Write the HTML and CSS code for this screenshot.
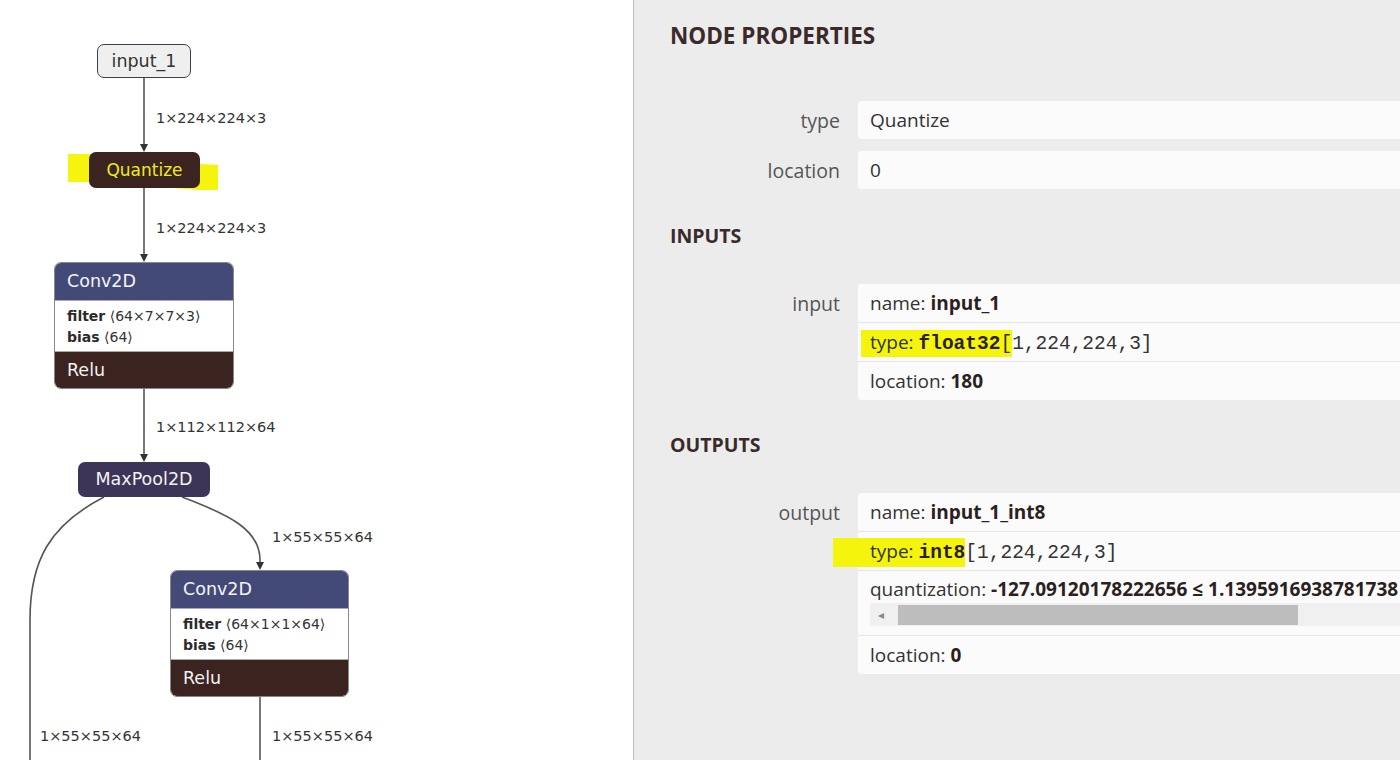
FILE: index.html
```html
<!DOCTYPE html>
<html>
<head>
<meta charset="utf-8">
<link rel="stylesheet" href="styles.css">
</head>
<body>
<div class="app">
  <div class="graph">
    <svg class="edges" width="633" height="760" viewBox="0 0 633 760">
      <polygon class="marker" points="68,154 90,154 200,164 218,165 218,190 200,190 90,182 68,182"/>
      <g class="lines">
        <path d="M144,78 L144,150"/>
        <path d="M144,188 L144,260"/>
        <path d="M144,387 L144,460"/>
        <path d="M104,497 C 50,525 30,560 30,620 L30,760"/>
        <path d="M182,497 C 230,515 260,530 260,560 L260,568"/>
        <path d="M260,697 L260,760"/>
      </g>
      <g class="heads">
        <path d="M140,144 L148,144 L144,152 Z"/>
        <path d="M140,254 L148,254 L144,262 Z"/>
        <path d="M140,454 L148,454 L144,462 Z"/>
        <path d="M256,562 L264,562 L260,570 Z"/>
      </g>
    </svg>

    <div class="node node-input" style="left:97px;top:44px;width:94px">input_1</div>
    <div class="node node-quant" style="left:89px;top:152px;width:111px">Quantize</div>

    <div class="node node-op" style="left:54px;top:262px;width:180px">
      <div class="op-head">Conv2D</div>
      <div class="op-body">
        <div><b>filter</b> ⟨64×7×7×3⟩</div>
        <div><b>bias</b> ⟨64⟩</div>
      </div>
      <div class="op-foot">Relu</div>
    </div>

    <div class="node node-pool" style="left:78px;top:462px;width:132px">MaxPool2D</div>

    <div class="node node-op" style="left:170px;top:570px;width:179px">
      <div class="op-head">Conv2D</div>
      <div class="op-body">
        <div><b>filter</b> ⟨64×1×1×64⟩</div>
        <div><b>bias</b> ⟨64⟩</div>
      </div>
      <div class="op-foot">Relu</div>
    </div>

    <div class="edge-label" style="left:156px;top:108px">1×224×224×3</div>
    <div class="edge-label" style="left:156px;top:218px">1×224×224×3</div>
    <div class="edge-label" style="left:156px;top:417px">1×112×112×64</div>
    <div class="edge-label" style="left:272px;top:527px">1×55×55×64</div>
    <div class="edge-label" style="left:272px;top:726px">1×55×55×64</div>
    <div class="edge-label" style="left:40px;top:726px">1×55×55×64</div>
  </div>

  <div class="sidebar">
    <h2 class="title">NODE PROPERTIES</h2>

    <div class="props">
      <div class="prop">
        <div class="prop-label">type</div>
        <div class="card"><div class="row">Quantize</div></div>
      </div>
      <div class="prop">
        <div class="prop-label">location</div>
        <div class="card"><div class="row">0</div></div>
      </div>
    </div>

    <h3 class="section">INPUTS</h3>
    <div class="props">
      <div class="prop">
        <div class="prop-label">input</div>
        <div class="card">
          <div class="row">name: <b>input_1</b></div>
          <div class="row"><span class="hl hl-in">type: <span class="mono"><b>float32</b>[</span></span><span class="mono">1,224,224,3]</span></div>
          <div class="row">location: <b>180</b></div>
        </div>
      </div>
    </div>

    <h3 class="section section-out">OUTPUTS</h3>
    <div class="props">
      <div class="prop">
        <div class="prop-label">output</div>
        <div class="card">
          <div class="row">name: <b>input_1_int8</b></div>
          <div class="row"><span class="hl hl-out">type: <span class="mono"><b>int8</b></span></span><span class="mono">[1,224,224,3]</span></div>
          <div class="row row-quant">
            <div class="quant-text">quantization: <b>-127.09120178222656 ≤ 1.1395916938781738</b></div>
            <div class="scrollbar">
              <span class="scroll-arrow">◂</span>
              <span class="scroll-thumb"></span>
            </div>
          </div>
          <div class="row">location: <b>0</b></div>
        </div>
      </div>
    </div>
  </div>
</div>
</body>
</html>
```

FILE: styles.css
```css
html, body {
  margin: 0;
  padding: 0;
}
body {
  width: 1400px;
  height: 760px;
  overflow: hidden;
  font-family: "Open Sans", "Noto Sans", sans-serif;
  color: #333;
}
.app {
  display: flex;
  width: 1400px;
  height: 760px;
}
.graph {
  position: relative;
  width: 633px;
  height: 760px;
  flex: none;
  background: #fff;
  border-right: 1px solid #bdbdbd;
  overflow: hidden;
  font-family: "DejaVu Sans", "Noto Sans", sans-serif;
}
.edges {
  position: absolute;
  left: 0;
  top: 0;
}
.marker {
  fill: #f4f40c;
}
.lines path {
  fill: none;
  stroke: #555;
  stroke-width: 1.6;
}
.heads path {
  fill: #333;
}
.node {
  position: absolute;
  box-sizing: border-box;
  border-radius: 7px;
  font-size: 17.5px;
  text-align: center;
}
.node-input {
  height: 34px;
  line-height: 32px;
  background: #efefef;
  border: 1px solid #3d3d4d;
  color: #333;
}
.node-quant {
  height: 36px;
  line-height: 36px;
  background: #3b2320;
  color: #ecec1a;
  font-size: 17px;
}
.node-pool {
  height: 35px;
  line-height: 35px;
  background: #3c3557;
  color: #f2f2f2;
}
.node-op {
  text-align: left;
  overflow: hidden;
  border: 1px solid #888;
  background: #fff;
}
.op-head {
  height: 37px;
  line-height: 37px;
  padding-left: 12px;
  background: #434a78;
  color: #f4f4f4;
}
.op-body {
  padding: 5px 12px 3px;
  font-size: 14px;
  line-height: 21px;
  color: #333;
  border-top: 1px solid #aaa;
  border-bottom: 1px solid #aaa;
  white-space: nowrap;
}
.op-body b {
  color: #2b2b2b;
}
.op-foot {
  height: 36px;
  line-height: 36px;
  padding-left: 12px;
  background: #3b2320;
  color: #f2f2f2;
}
.edge-label {
  position: absolute;
  font-size: 14.5px;
  line-height: 20px;
  color: #333;
  white-space: nowrap;
}

.sidebar {
  flex: 1;
  background: #ececec;
  overflow: hidden;
  padding-left: 36px;
  color: #333;
}
.title {
  margin: 24px 0 53px;
  font-size: 22.5px;
  line-height: 24px;
  font-weight: 700;
  color: #3a2a2a;
}
.section {
  margin: 34px 0 36px;
  font-size: 19.5px;
  line-height: 24px;
  font-weight: 700;
  color: #3a2a2a;
}
.section-out {
  margin-top: 33px;
}
.props {
  display: flex;
  flex-direction: column;
  gap: 11px;
}
.prop {
  display: grid;
  grid-template-columns: 170px 760px;
  column-gap: 18px;
  align-items: start;
}
.prop-label {
  text-align: right;
  font-size: 19.5px;
  line-height: 39px;
  color: #555;
}
.card {
  background: #fbfbfb;
  border-radius: 3px;
}
.row {
  height: 39px;
  box-sizing: border-box;
  padding: 0 12px;
  font-size: 19px;
  line-height: 38px;
  white-space: nowrap;
  border-top: 1px solid #e6e6e6;
}
.row:first-child {
  border-top: none;
  height: 38px;
}
.row b {
  color: #2b1f1f;
}
.mono {
  font-family: "Liberation Mono", "DejaVu Sans Mono", monospace;
  font-size: 19.5px;
  color: #333;
}
.hl {
  display: inline-block;
  background: #f4f40c;
  line-height: 25px;
}
.hl-in {
  margin-left: -9px;
  padding-left: 9px;
}
.hl-out {
  margin-left: -37px;
  padding-left: 37px;
  line-height: 27px;
}
.row-quant {
  height: 65px;
  padding-top: 4px;
  line-height: 28px;
}
.quant-text {
  height: 28px;
}
.scrollbar {
  display: flex;
  align-items: center;
  height: 23px;
  background: #f0f0f0;
  gap: 6px;
}
.scroll-arrow {
  width: 22px;
  text-align: center;
  font-size: 12px;
  color: #888;
}
.scroll-thumb {
  width: 400px;
  height: 20px;
  background: #bdbdbd;
}
```
